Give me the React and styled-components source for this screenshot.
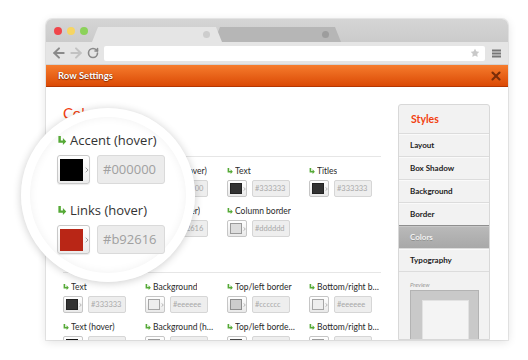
import React from 'react'
import styled, { createGlobalStyle } from 'styled-components'
import { ArrowLeft, ArrowRight, RotateCw, Star, X } from 'lucide-react'

const GlobalStyle = createGlobalStyle`
  html, body {
    margin: 0;
    padding: 0;
    background: #fff;
  }
  body {
    font-family: Lato, "Open Sans", sans-serif;
  }
`

const Page = styled.div`
  position: relative;
  width: 528px;
  height: 360px;
  padding: 19px 0 0 46px;
  box-sizing: border-box;
  overflow: hidden;
`

const Window = styled.div`
  width: 462px;
  height: 321px;
  display: flex;
  flex-direction: column;
  border-radius: 6px 6px 0 0;
  background: #fff;
  box-shadow: 0 2px 10px rgba(0, 0, 0, 0.12), 0 0 0 1px rgba(0, 0, 0, 0.07);
`

const TabBar = styled.div`
  height: 23px;
  flex: none;
  display: flex;
  align-items: flex-end;
  padding-left: 8px;
  border-radius: 6px 6px 0 0;
  background: linear-gradient(#d5d5d5, #cbcbcb);
`

const Lights = styled.div`
  align-self: flex-start;
  margin: 8px 4px 0 0;
  display: flex;
  gap: 5px;
`

const Light = styled.span`
  width: 8px;
  height: 8px;
  border-radius: 50%;
  background: ${p => p.$color};
`

const Tab = styled.div`
  position: relative;
  z-index: ${p => (p.$active ? 2 : 1)};
  width: ${p => p.$width}px;
  height: 15px;
  margin-left: ${p => (p.$active ? 0 : -8)}px;
  padding-right: 12px;
  box-sizing: border-box;
  display: flex;
  align-items: center;
  justify-content: flex-end;
  background: ${p => (p.$active ? '#e5e5e5' : '#b6b6b6')};
  clip-path: polygon(6px 0, calc(100% - 6px) 0, 100% 100%, 0 100%);
`

const TabDot = styled.span`
  width: 7px;
  height: 7px;
  border-radius: 50%;
  background: ${p => (p.$active ? '#cdcdcd' : '#9d9d9d')};
`

const Toolbar = styled.div`
  height: 23px;
  flex: none;
  box-sizing: border-box;
  display: flex;
  align-items: center;
  padding: 0 7px 0 4px;
  background: #e5e5e5;
  border-bottom: 1px solid #d2d2d2;
`

const NavSlot = styled.div`
  width: 17px;
  height: 17px;
  display: flex;
  align-items: center;
  justify-content: center;
  color: ${p => (p.$dim ? '#c2c2c2' : '#8a8a8a')};
`

const Address = styled.div`
  flex: 1;
  height: 15px;
  margin: 0 7px 0 3px;
  padding-right: 5px;
  display: flex;
  align-items: center;
  justify-content: flex-end;
  border-radius: 2px;
  background: #fff;
`

const TitleBar = styled.div`
  height: 22px;
  flex: none;
  box-sizing: border-box;
  display: flex;
  align-items: center;
  justify-content: space-between;
  padding: 0 5px 0 12px;
  background: linear-gradient(#f67c2d, #db4a05);
  border-bottom: 1px solid #b43702;
`

const Title = styled.span`
  font: bold 9.5px Lato, sans-serif;
  color: #fff;
  text-shadow: 0 0 1px #8b2b00, 0 1px 1px #8b2b00;
`

const Body = styled.div`
  flex: 1;
  min-height: 0;
  display: flex;
  overflow: hidden;
`

const Main = styled.div`
  flex: 1;
  padding: 17px 17px 0 17px;
`

const Heading = styled.h2`
  margin: 0 0 34px;
  font: 15px/18px Lato, sans-serif;
  color: #f2400f;
`

const Section = styled.div`
  display: grid;
  grid-template-columns: 82px 82px 82px 72px;
  row-gap: 8px;
  padding: 8px 0 35px;
  border-top: 1px solid #e6e6e6;
`

const Field = styled.div`
  width: 70px;
  display: flex;
  flex-direction: column;
  gap: 3px;
`

const Label = styled.div`
  height: 12px;
  display: flex;
  align-items: center;
  gap: 2px;
  font: 8.5px/12px Lato, sans-serif;
  color: #2a2a2a;
  white-space: nowrap;
  min-width: 0;

  span {
    overflow: hidden;
    text-overflow: ellipsis;
  }
`

const Control = styled.div`
  display: flex;
  gap: 5px;
  height: 17px;
`

const Swatch = styled.div`
  width: 20px;
  height: 17px;
  box-sizing: border-box;
  display: flex;
  align-items: center;
  padding-left: 2px;
  gap: 1px;
  border: 1px solid #c6c6c6;
  border-radius: 2px;
  background: linear-gradient(#fff, #e9e9e9);
`

const Chip = styled.span`
  width: 13px;
  height: 11px;
  box-sizing: border-box;
  background: ${p => p.$color};
  border: 1px solid rgba(0, 0, 0, 0.3);
`

const HexInput = styled.div`
  width: 38px;
  height: 17px;
  box-sizing: border-box;
  padding-left: 2px;
  border: 1px solid #d6d6d6;
  border-radius: 2px;
  background: #eee;
  font: 7.5px/15px Lato, sans-serif;
  color: #a8a8a8;
`

const Sidebar = styled.div`
  width: 92px;
  flex: none;
  margin: 17px 18px 0 0;
  display: flex;
  flex-direction: column;
  box-sizing: border-box;
  border: 1px solid #d8d8d8;
  border-radius: 3px 3px 0 0;
  background: #f2f2f2;
`

const SideHead = styled.div`
  height: 28px;
  flex: none;
  display: flex;
  align-items: center;
  padding-left: 12px;
  font: bold 10.5px Lato, sans-serif;
  color: #f2400f;
`

const SideItem = styled.div`
  height: 23px;
  flex: none;
  box-sizing: border-box;
  display: flex;
  align-items: center;
  padding-left: 11px;
  border-top: 1px solid ${p => (p.$active ? '#8f8f8f' : '#dcdcdc')};
  box-shadow: inset 0 1px 0 ${p => (p.$active ? 'rgba(255,255,255,0.2)' : '#fafafa')};
  background: ${p => (p.$active ? 'linear-gradient(#bababa, #a8a8a8)' : 'transparent')};
  font: bold 8px Lato, sans-serif;
  color: ${p => (p.$active ? '#f2f2f2' : '#222')};
  text-shadow: ${p => (p.$active ? '0 1px 0 rgba(0,0,0,0.2)' : 'none')};
`

const PreviewPane = styled.div`
  flex: 1;
  min-height: 0;
  overflow: hidden;
  display: flex;
  flex-direction: column;
  padding: 9px 0 0 11px;
  border-top: 1px solid #dcdcdc;
`

const PreviewLabel = styled.div`
  font: italic 6px/7px Lato, sans-serif;
  color: #9a9a9a;
  margin-bottom: 2px;
`

const PreviewBox = styled.div`
  flex: 1;
  width: 69px;
  box-sizing: border-box;
  padding: 9px 0 0 11px;
  border: 1px solid #b3b3b3;
  background: #c9c9c9;
`

const PreviewInner = styled.div`
  width: 45px;
  height: 80px;
  border: 1px solid #e2e2e2;
  background: #f4f4f4;
`

const Lens = styled.div`
  position: absolute;
  left: 21px;
  top: 108px;
  width: 174px;
  height: 174px;
  box-sizing: border-box;
  padding: 23px 0 0 36px;
  border-radius: 50%;
  background: #fff;
  box-shadow: 0 1px 9px rgba(0, 0, 0, 0.2), inset 0 0 0 9px #fff,
    inset 0 0 10px 9px rgba(0, 0, 0, 0.06);
`

const LensLabel = styled.div`
  height: 18px;
  display: flex;
  align-items: center;
  gap: 3px;
  font: 13px/18px "Open Sans", sans-serif;
  color: #333;
  margin-bottom: 6px;
`

const LensControl = styled.div`
  display: flex;
  gap: 7px;
  height: 29px;
  margin-bottom: ${p => (p.$last ? 0 : 17)}px;
`

const LensSwatch = styled.div`
  width: 33px;
  height: 29px;
  box-sizing: border-box;
  display: flex;
  align-items: center;
  gap: 2px;
  padding-left: 2px;
  border: 1px solid #c9c9c9;
  border-radius: 3px;
  background: linear-gradient(#fff, #ececec);
  box-shadow: 0 1px 1px rgba(0, 0, 0, 0.08);
`

const LensChip = styled.span`
  width: 23px;
  height: 22px;
  background: ${p => p.$color};
`

const LensInput = styled.div`
  width: 68px;
  height: 29px;
  box-sizing: border-box;
  padding-left: 5px;
  border: 1px solid #dadada;
  border-radius: 3px;
  background: #ececec;
  font: 13px/27px "Open Sans", sans-serif;
  color: #a0a0a0;
`

const TurnArrow = ({ w = 6, h = 6 }) => (
  <svg width={w} height={h} viewBox="0 0 10 10" style={{ flex: 'none' }}>
    <path d="M1 0h2.7v4.9H6V2.2l3.7 3.9L6 10V7.5H1z" fill="#55a936" />
  </svg>
)

const Caret = ({ w = 2, h = 4 }) => (
  <svg width={w + 1} height={h} viewBox="0 0 3 4" style={{ flex: 'none' }}>
    <path d="M0.5 0.3L2.3 2L0.5 3.7" fill="none" stroke="#9a9a9a" strokeWidth="0.7" />
  </svg>
)

const MenuIcon = () => (
  <svg width="9" height="9" viewBox="0 0 9 9">
    <rect x="0" y="0.5" width="9" height="2" fill="#777" />
    <rect x="0" y="3.5" width="9" height="2" fill="#777" />
    <rect x="0" y="6.5" width="9" height="2" fill="#777" />
  </svg>
)

const topFields = [
  { label: 'Accent', hex: '#f2400f' },
  { label: 'Accent (hover)', hex: '#000000' },
  { label: 'Text', hex: '#333333' },
  { label: 'Titles', hex: '#333333' },
  { label: 'Links', hex: '#f2400f' },
  { label: 'Links (hover)', hex: '#b92616' },
  { label: 'Column border', hex: '#dddddd' },
  null,
]

const buttonFields = [
  { label: 'Text', hex: '#333333' },
  { label: 'Background', hex: '#eeeeee' },
  { label: 'Top/left border', hex: '#cccccc' },
  { label: 'Bottom/right border', hex: '#eeeeee' },
  { label: 'Text (hover)', hex: '#222222' },
  { label: 'Background (hover)', hex: '#dddddd' },
  { label: 'Top/left border (hover)', hex: '#666666' },
  { label: 'Bottom/right border (hover)', hex: '#dddddd' },
]

const ColorField = ({ label, hex }) => (
  <Field>
    <Label>
      <TurnArrow />
      <span>{label}</span>
    </Label>
    <Control>
      <Swatch>
        <Chip $color={hex} />
        <Caret />
      </Swatch>
      <HexInput>{hex}</HexInput>
    </Control>
  </Field>
)

const styleTabs = ['Layout', 'Box Shadow', 'Background', 'Border', 'Colors', 'Typography']

const lensFields = [
  { label: 'Accent (hover)', hex: '#000000' },
  { label: 'Links (hover)', hex: '#b92616' },
]

export default function App() {
  return (
    <Page>
      <GlobalStyle />
      <Window>
        <TabBar>
          <Lights>
            <Light $color="#f0454a" />
            <Light $color="#f6d563" />
            <Light $color="#8cd25a" />
          </Lights>
          <Tab $active $width={130}>
            <TabDot $active />
          </Tab>
          <Tab $width={127}>
            <TabDot />
          </Tab>
        </TabBar>
        <Toolbar>
          <NavSlot>
            <ArrowLeft size={16} strokeWidth={3} />
          </NavSlot>
          <NavSlot $dim>
            <ArrowRight size={16} strokeWidth={3} />
          </NavSlot>
          <NavSlot>
            <RotateCw size={12} strokeWidth={3.2} />
          </NavSlot>
          <Address>
            <Star size={10} fill="#c9c9c9" stroke="none" />
          </Address>
          <MenuIcon />
        </Toolbar>
        <TitleBar>
          <Title>Row Settings</Title>
          <X size={14} strokeWidth={3.6} color="#7a2d08" />
        </TitleBar>
        <Body>
          <Main>
            <Heading>Colors</Heading>
            <Section>
              {topFields.map((f, i) => (f ? <ColorField key={i} {...f} /> : <div key={i} />))}
            </Section>
            <Section>
              {buttonFields.map((f, i) => (
                <ColorField key={i} {...f} />
              ))}
            </Section>
          </Main>
          <Sidebar>
            <SideHead>Styles</SideHead>
            {styleTabs.map(t => (
              <SideItem key={t} $active={t === 'Colors'}>
                {t}
              </SideItem>
            ))}
            <PreviewPane>
              <PreviewLabel>Preview</PreviewLabel>
              <PreviewBox>
                <PreviewInner />
              </PreviewBox>
            </PreviewPane>
          </Sidebar>
        </Body>
      </Window>
      <Lens>
        {lensFields.map((f, i) => (
          <div key={f.label}>
            <LensLabel>
              <TurnArrow w={10} h={9} />
              {f.label}
            </LensLabel>
            <LensControl $last={i === lensFields.length - 1}>
              <LensSwatch>
                <LensChip $color={f.hex} />
                <Caret w={3} h={6} />
              </LensSwatch>
              <LensInput>{f.hex}</LensInput>
            </LensControl>
          </div>
        ))}
      </Lens>
    </Page>
  )
}
